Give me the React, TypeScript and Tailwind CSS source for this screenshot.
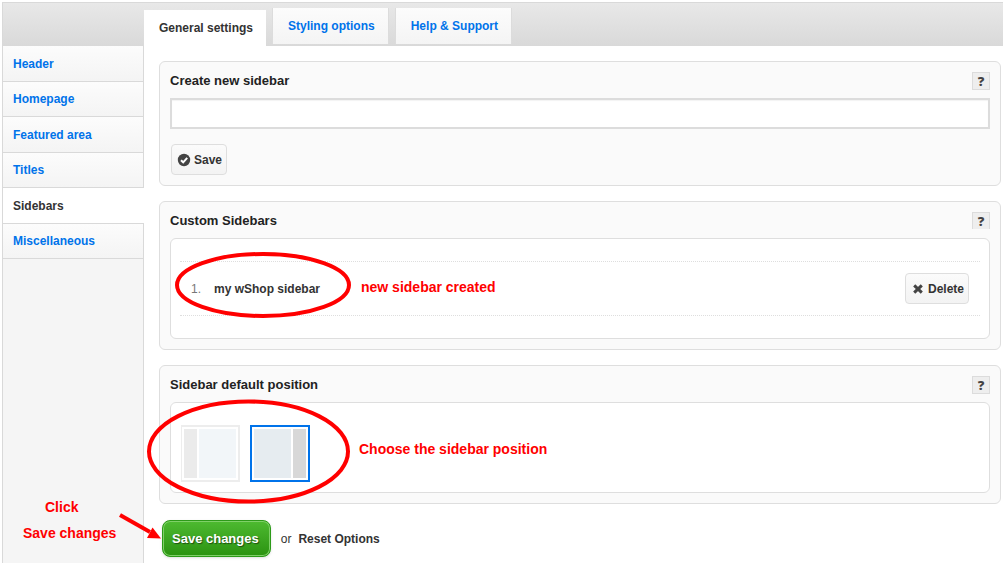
import { useState } from "react";
import type { ReactNode } from "react";

const tabs = ["General settings", "Styling options", "Help & Support"];
const sections = ["Header", "Homepage", "Featured area", "Titles", "Sidebars", "Miscellaneous"];

function Panel({ title, clipped, children }: { title: ReactNode; clipped?: boolean; children: ReactNode }) {
  return (
    <section className="relative rounded-md border border-[#dedede] bg-[#fafafa] px-2.5 pt-2.5 pb-2.5">
      <div className="mb-2 flex h-[18px] items-start justify-between">
        <h2 className="text-[13px] leading-[18px] font-bold text-[#222]">{title}</h2>
        <button
          type="button"
          aria-label="Help"
          className={
            clipped
              ? "flex h-[17px] w-[18px] items-center justify-center border border-b-0 border-[#dcdcdc] bg-[#eee] pt-px font-['Noto_Sans',sans-serif] text-[13px] leading-none font-black text-[#444]"
              : "flex h-[18px] w-[18px] items-center justify-center border border-[#dcdcdc] bg-[#eee] pt-px font-['Noto_Sans',sans-serif] text-[13px] leading-none font-black text-[#444]"
          }
        >
          ?
        </button>
      </div>
      {children}
    </section>
  );
}

function SmallButton({ icon, children }: { icon: ReactNode; children: ReactNode }) {
  return (
    <button
      type="button"
      className="flex h-[31px] items-center gap-[3px] rounded border border-[#dedede] bg-linear-to-b from-[#fbfbfb] to-[#f3f3f3] pr-1 pl-[5px] text-[12px] font-bold text-[#333]"
    >
      {icon}
      {children}
    </button>
  );
}

function CheckIcon() {
  return (
    <svg width="14" height="14" viewBox="0 0 14 14" aria-hidden="true">
      <circle cx="7" cy="7" r="6.2" fill="#444" />
      <path d="M4 7.2 6.2 9.3 10.2 4.8" fill="none" stroke="#fff" strokeWidth="2" />
    </svg>
  );
}

function CrossIcon() {
  return (
    <svg width="14" height="14" viewBox="0 0 14 14" aria-hidden="true">
      <path d="M3.2 3.4 10.8 10.6M10.8 3.4 3.2 10.6" fill="none" stroke="#444" strokeWidth="3" />
    </svg>
  );
}

export default function App() {
  const [position, setPosition] = useState("right");
  const [name, setName] = useState("");

  return (
    <div className="flex min-h-screen flex-col bg-white pt-0.5 pl-0.5 font-['Liberation_Sans',Arial,sans-serif]">
      <header className="flex h-11 border-t border-l border-[#d9d9d9] bg-linear-to-b from-[#e8e8e8] to-[#d9d9d9] pl-[141px]">
        <nav className="flex gap-1.5" aria-label="Settings">
          {tabs.map((tab, i) => (
            <a
              key={tab}
              href="#"
              className={
                i === 0
                  ? "mt-[7px] flex h-9 items-center bg-white pr-[13px] pl-[15px] text-[12px] font-bold text-[#333]"
                  : "mt-[5px] flex h-9 items-center border-x border-[#dcdcdc] bg-linear-to-b from-[#fcfcfc] to-[#f4f4f4] pr-[13px] pl-[15px] text-[12px] font-bold text-[#0073ea]"
              }
            >
              {tab}
            </a>
          ))}
        </nav>
      </header>

      <div className="flex flex-1">
        <aside className="relative w-[142px] shrink-0 bg-[#f5f5f5]">
          <div className="flex h-full flex-col border-l border-[#d9d9d9]">
            {sections.map((section) => (
              <a
                key={section}
                href="#"
                className={
                  section === "Sidebars"
                    ? "flex items-center border-b border-[#d9d9d9] bg-white pl-2.5 text-[12px] font-bold text-[#333] odd:h-9 even:h-[35px]"
                    : "flex items-center border-r border-b border-[#d9d9d9] bg-linear-to-b from-[#fcfcfc] to-[#f4f4f4] pl-2.5 text-[12px] font-bold text-[#0073ea] odd:h-9 even:h-[35px]"
                }
              >
                {section}
              </a>
            ))}
            <div className="flex-1 border-r border-[#d9d9d9]" />
          </div>
          <p className="absolute top-[448px] left-[21px] w-24 text-[14px] leading-[26px] font-bold whitespace-nowrap text-[#f00]">
            <span className="block pl-[22px]">Click</span>
            <span className="block">Save changes</span>
          </p>
          <svg className="absolute top-[464px] left-[114px] z-10" width="48" height="34" viewBox="0 0 48 34" aria-hidden="true">
            <path d="M4 5 34 22" stroke="#f00" strokeWidth="4" />
            <path d="M45 28.5 31 28 36.5 17.5Z" fill="#f00" />
          </svg>
        </aside>

        <main className="flex min-w-0 flex-1 flex-col gap-[15px] pt-[15px] pr-0.5 pl-[15px]">
          <Panel title={<label htmlFor="sidebar-name">Create new sidebar</label>}>
            <input
              id="sidebar-name"
              type="text"
              value={name}
              onChange={(e) => setName(e.target.value)}
              className="block h-[31px] w-full border-2 border-[#dcdcdc] bg-white px-2 text-[13px] inset-shadow-xs outline-none"
            />
            <div className="mt-[15px] flex pl-px">
              <SmallButton icon={<CheckIcon />}>Save</SmallButton>
            </div>
          </Panel>

          <Panel title="Custom Sidebars" clipped>
            <div className="rounded-md border border-[#dedede] bg-white px-[9px] py-[22px]">
              <ol className="border-y border-dotted border-[#dedede]">
                <li className="flex h-[53px] items-center pr-[11px] pl-[11px] text-[12px]">
                  <span className="w-[23px] text-[#777]">1.</span>
                  <span className="flex-1 font-bold text-[#333]">my wShop sidebar</span>
                  <SmallButton icon={<CrossIcon />}>Delete</SmallButton>
                </li>
              </ol>
            </div>
            <svg className="absolute top-[49px] left-[15px]" width="178" height="68" viewBox="0 0 178 68" aria-hidden="true">
              <ellipse cx="88" cy="34" rx="86" ry="31" fill="none" stroke="#f00" strokeWidth="4" />
            </svg>
            <p className="absolute top-[76px] left-[201px] text-[14px] leading-[18px] font-bold text-[#f00]">new sidebar created</p>
          </Panel>

          <Panel title="Sidebar default position">
            <fieldset className="flex h-[91px] gap-2.5 rounded-md border border-[#dedede] bg-white px-2.5 pt-[22px]">
              <label
                className={
                  position === "left"
                    ? "flex h-[57px] w-[59px] gap-0.5 border-2 border-[#0073ea] p-0.5"
                    : "flex h-[57px] w-[59px] gap-0.5 border-2 border-l border-[#ededed] p-0.5"
                }
              >
                <input
                  type="radio"
                  name="position"
                  aria-label="Sidebar on the left"
                  checked={position === "left"}
                  onChange={() => setPosition("left")}
                  className="sr-only"
                />
                <span className="w-[13px] bg-[#ebebeb]" />
                <span className="flex-1 bg-[#f2f6f9]" />
              </label>
              <label
                className={
                  position === "right"
                    ? "flex h-[57px] w-[60px] gap-0.5 border-2 border-[#0073ea] p-0.5"
                    : "flex h-[57px] w-[60px] gap-0.5 border-2 border-[#ededed] p-0.5"
                }
              >
                <input
                  type="radio"
                  name="position"
                  aria-label="Sidebar on the right"
                  checked={position === "right"}
                  onChange={() => setPosition("right")}
                  className="sr-only"
                />
                <span className="flex-1 bg-[#e6ecf0]" />
                <span className="w-[13px] bg-[#d8d8d8]" />
              </label>
            </fieldset>
            <svg className="absolute top-8 left-[-14px]" width="206" height="108" viewBox="0 0 206 108" aria-hidden="true">
              <ellipse cx="102.5" cy="53.5" rx="99.5" ry="50" fill="none" stroke="#f00" strokeWidth="4" />
            </svg>
            <p className="absolute top-[74px] left-[199px] text-[14px] leading-[18px] font-bold text-[#f00]">Choose the sidebar position</p>
          </Panel>

          <div className="flex items-center pt-px pl-[3px] text-[12px] text-[#333]">
            <button
              type="button"
              className="h-[37px] rounded-lg border border-[#2d9a19] bg-linear-to-b from-[#4dba30] to-[#2b9310] pr-[11px] pl-[9px] text-[13px] font-bold text-white shadow-sm inset-ring inset-ring-[#7fd068] text-shadow-[1px_1px_1px_#00000080]"
            >
              Save changes
            </button>
            <span className="ml-2.5">or</span>
            <a href="#" className="ml-[7px] font-bold">
              Reset Options
            </a>
          </div>
        </main>
      </div>
    </div>
  );
}
